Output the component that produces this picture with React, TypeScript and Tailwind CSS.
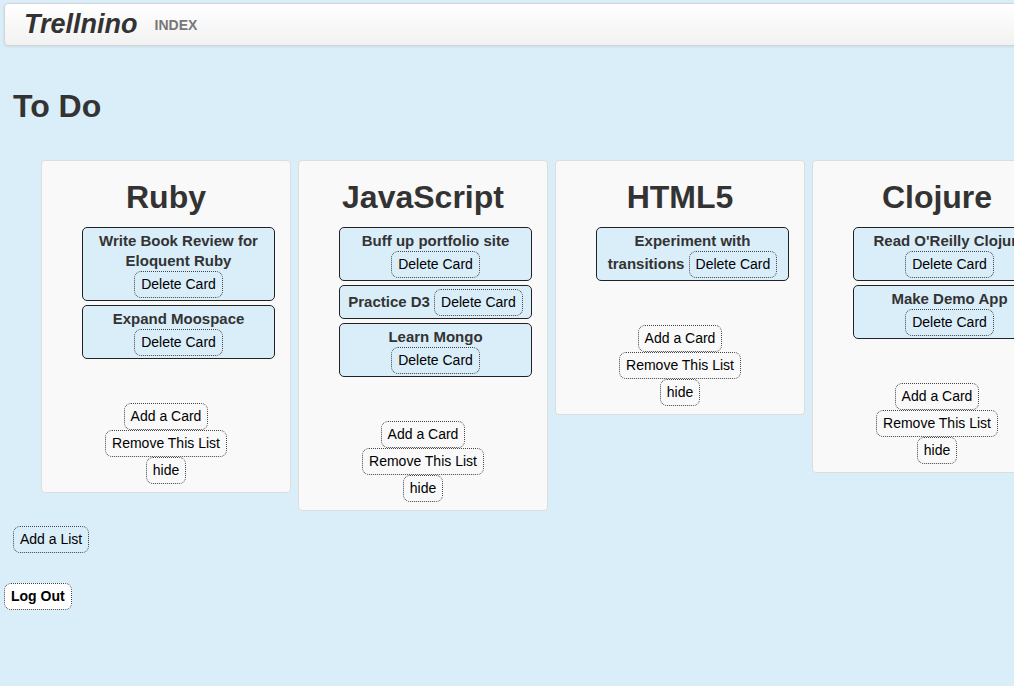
const lists = [
    {
        title: "Ruby",
        cards: ["Write Book Review for Eloquent Ruby", "Expand Moospace"],
    },
    {
        title: "JavaScript",
        cards: ["Buff up portfolio site", "Practice D3", "Learn Mongo"],
    },
    {
        title: "HTML5",
        cards: ["Experiment with transitions"],
    },
    {
        title: "Clojure",
        cards: ["Read O'Reilly Clojure", "Make Demo App"],
    },
]

function Btn({ children, bold = false, className = "" }: { children: React.ReactNode; bold?: boolean; className?: string }) {
    return (
        <button
            type="button"
            className={`inline-block border border-dotted border-[#444] rounded-[7px] px-[6px] py-[4px] text-[14px] leading-[17px] text-black ${bold ? "font-bold" : "font-normal"} ${className}`}
        >
            {children}
        </button>
    )
}

function List({ title, cards }: { title: string; cards: string[] }) {
    return (
        <div className="w-[250px] shrink-0 border border-[#dddddd] rounded-[4px] bg-[#f9f9f9] pt-[18px] pb-[8px]">
            <h2 className="text-center text-[32px] leading-[36px] font-bold text-[#333] mb-[12px]">{title}</h2>

            {/* cards */}
            <div className="pl-[40px] pr-[15px] flex flex-col gap-[4px]">
                {cards.map((c) => (
                    <div
                        key={c}
                        className="border border-[#222] rounded-[5px] bg-[#d9eef9] text-center pt-[3px] pb-[2px] px-[4px] text-[15px] leading-[20px] font-bold text-[#333]"
                    >
                        {c} <Btn>Delete Card</Btn>
                    </div>
                ))}
            </div>

            {/* list actions */}
            <div className="mt-[44px] flex flex-col items-center">
                <Btn>Add a Card</Btn>
                <Btn>Remove This List</Btn>
                <Btn>hide</Btn>
            </div>
        </div>
    )
}

export default function App() {
    return (
        <div
            className="min-h-screen overflow-hidden bg-[#d9eef9] px-[4px] pt-[3px] pb-[40px] text-[#333]"
            style={{ fontFamily: '"Liberation Sans", Arial, sans-serif' }}
        >
            {/* Navbar */}
            <div className="h-[43px] mr-[-20px] flex items-center rounded-[4px] border border-[#d4d4d4] bg-gradient-to-b from-white to-[#f2f2f2] shadow-[0_1px_3px_rgba(0,0,0,0.08)] pl-[19px]">
                <span className="text-[27px] leading-[27px] font-bold italic text-[#333]">Trellnino</span>
                <span className="ml-[17px] text-[14px] leading-[14px] font-bold text-[#777]">INDEX</span>
            </div>

            <div className="pl-[9px]">
                <h1 className="mt-[42px] text-[32px] leading-[36px] font-bold text-[#333]">To Do</h1>

                <div className="mt-[36px] ml-[28px] flex items-start gap-[7px]">
                    {lists.map((l) => (
                        <List key={l.title} title={l.title} cards={l.cards} />
                    ))}
                </div>

                <div className="mt-[15px]">
                    <Btn>Add a List</Btn>
                </div>
            </div>

            <div className="mt-[30px]">
                <Btn bold className="bg-white">Log Out</Btn>
            </div>
        </div>
    )
}
